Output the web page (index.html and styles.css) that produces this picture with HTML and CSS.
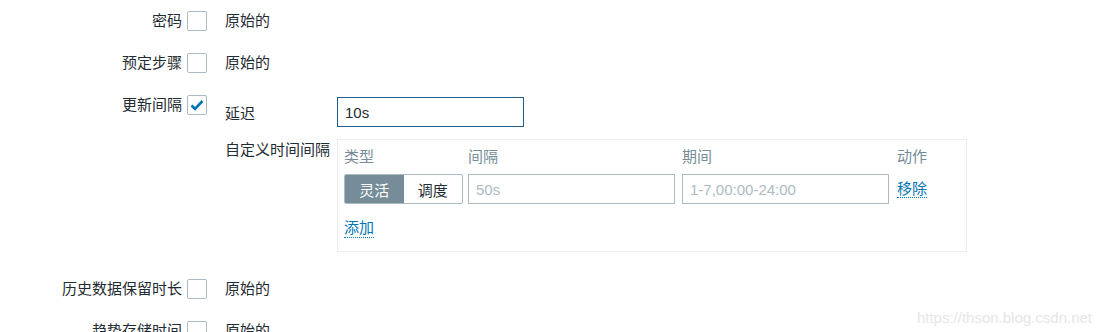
FILE: index.html
```html
<!DOCTYPE html>
<html lang="zh-CN">
<head>
  <meta charset="UTF-8" />
  <title>更新间隔</title>
  <link rel="stylesheet" href="styles.css">
</head>
<body>

  <div class="form">
    <div class="row">
      <div class="label">密码</div>
      <span class="checkbox"></span>
      <div class="value">原始的</div>
    </div>

    <div class="row">
      <div class="label">预定步骤</div>
      <span class="checkbox"></span>
      <div class="value">原始的</div>
    </div>

    <div class="row">
      <div class="label">更新间隔</div>
      <span class="checkbox checked">
        <svg width="14" height="12" viewBox="0 0 14 12"><path d="M1.5 6.5 L5 9.8 L12.5 2" fill="none" stroke="#0275b8" stroke-width="2.6"/></svg>
      </span>
      <div class="subform">
        <div class="sub-row">
          <div class="sub-label">延迟</div>
          <input class="text-input focused" type="text" value="10s">
        </div>
        <div class="sub-row top">
          <div class="sub-label">自定义时间间隔</div>
          <div class="interval-box">
            <div class="interval-grid">
              <div class="th">类型</div>
              <div class="th">间隔</div>
              <div class="th">期间</div>
              <div class="th">动作</div>

              <div class="segment">
                <span class="seg active">灵活</span>
                <span class="seg">调度</span>
              </div>
              <div><input class="text-input interval" type="text" placeholder="50s"></div>
              <div><input class="text-input period" type="text" placeholder="1-7,00:00-24:00"></div>
              <div><a class="link" href="#">移除</a></div>
            </div>
            <a class="link add" href="#">添加</a>
          </div>
        </div>
      </div>
    </div>

    <div class="row">
      <div class="label">历史数据保留时长</div>
      <span class="checkbox"></span>
      <div class="value">原始的</div>
    </div>

    <div class="row">
      <div class="label">趋势存储时间</div>
      <span class="checkbox"></span>
      <div class="value">原始的</div>
    </div>
  </div>

  <div class="watermark">https://thson.blog.csdn.net</div>

</body>
</html>
```

FILE: styles.css
```css
body {
  margin: 0;
  padding: 0;
  font-family: "Liberation Sans", "Noto Sans CJK SC", sans-serif;
  font-size: 15px;
  color: #1f2c33;
  background-color: #ffffff;
  height: 332px;
  overflow: hidden;
  position: relative;
}

.form {
  padding-top: 11px;
}

.row {
  display: flex;
  align-items: flex-start;
  margin-bottom: 22px;
}

.label {
  width: 187px;
  padding-right: 5px;
  box-sizing: border-box;
  text-align: right;
  line-height: 20px;
  white-space: nowrap;
}

.checkbox {
  width: 20px;
  height: 20px;
  box-sizing: border-box;
  border: 1px solid #acbbc2;
  border-radius: 2px;
  margin-right: 18px;
  display: flex;
  align-items: center;
  justify-content: center;
  flex-shrink: 0;
}

.value {
  line-height: 20px;
}

.subform {
  padding-top: 2px;
  margin-bottom: 5px;
}

.sub-row {
  display: flex;
  align-items: center;
}

.sub-row.top {
  align-items: flex-start;
  margin-top: 12px;
}

.sub-label {
  width: 112px;
  flex-shrink: 0;
  white-space: nowrap;
}

.sub-row.top .sub-label {
  line-height: 20px;
  padding-top: 1px;
}

.text-input {
  height: 30px;
  box-sizing: border-box;
  border: 1px solid #acbbc2;
  padding: 0 7px;
  font-family: "Liberation Sans", "Noto Sans CJK SC", sans-serif;
  font-size: 15px;
  color: #1f2c33;
  outline: none;
  margin: 0;
}

.text-input::placeholder {
  color: #acbbc2;
}

.text-input.focused {
  width: 187px;
  border-color: #1f5c8a;
}

.interval-box {
  width: 630px;
  box-sizing: border-box;
  border: 1px solid #ebeef0;
  padding: 8px 6px 13px 6px;
}

.interval-grid {
  display: grid;
  grid-template-columns: 124px 214px 215px auto;
  row-gap: 8px;
  align-items: center;
}

.th {
  color: #768d99;
  line-height: 18px;
}

.segment {
  display: flex;
  width: 119px;
  height: 30px;
  box-sizing: border-box;
  border: 1px solid #acbbc2;
  border-radius: 2px;
  overflow: hidden;
}

.seg {
  flex: 1;
  display: flex;
  align-items: center;
  justify-content: center;
}

.seg.active {
  background-color: #768d99;
  color: #ffffff;
}

.text-input.interval {
  width: 207px;
}

.text-input.period {
  width: 207px;
}

.link {
  color: #0275b8;
  text-decoration: none;
  border-bottom: 1px dotted #0275b8;
  line-height: 18px;
}

.add {
  display: inline-block;
  margin-top: 15px;
}

.watermark {
  position: absolute;
  right: 10px;
  bottom: 6px;
  font-size: 15px;
  color: #e6e6e6;
}
```
